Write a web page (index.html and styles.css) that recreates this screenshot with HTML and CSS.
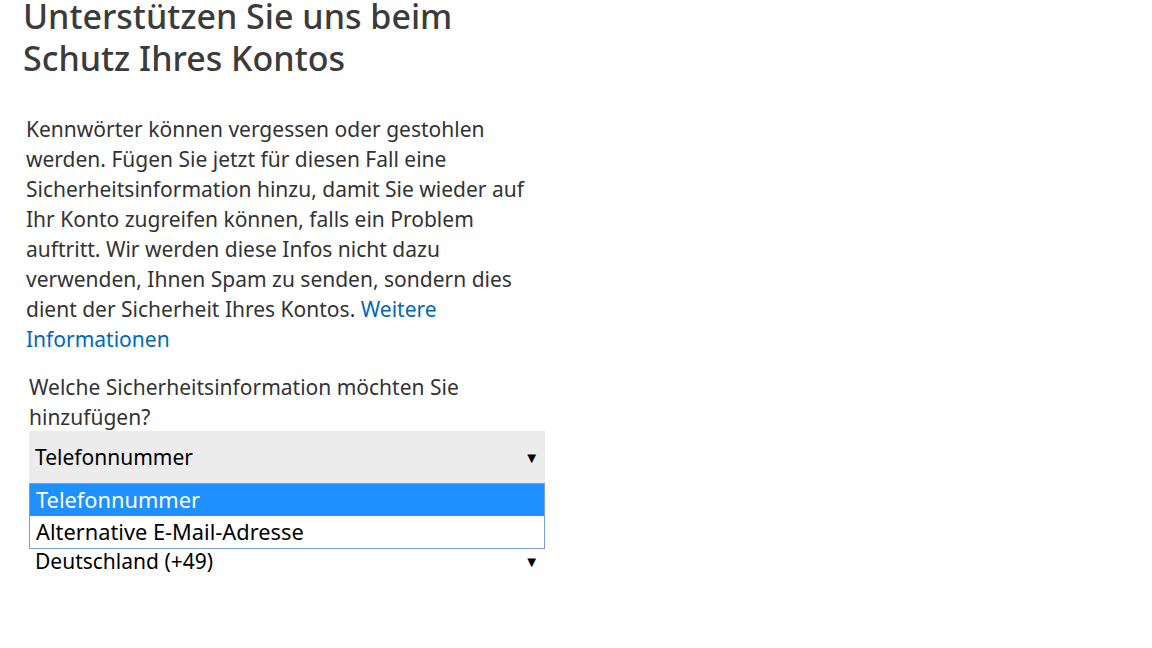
FILE: index.html
```html
<!DOCTYPE html>
<html lang="de">
<head>
    <meta charset="UTF-8">
    <title>Sicherheitsinformationen</title>
    <link rel="stylesheet" href="styles.css">
</head>
<body>
    <div class="page">
        <h1 class="title">Unterstützen Sie uns beim Schutz Ihres Kontos</h1>

        <p class="intro">Kennwörter können vergessen oder gestohlen werden. Fügen Sie jetzt für diesen Fall eine Sicherheitsinformation hinzu, damit Sie wieder auf Ihr Konto zugreifen können, falls ein Problem auftritt. Wir werden diese Infos nicht dazu verwenden, Ihnen Spam zu senden, sondern dies dient der Sicherheit Ihres Kontos. <a href="#">Weitere Informationen</a></p>

        <div class="field">
            <label class="field-label">Welche Sicherheitsinformation möchten Sie hinzufügen?</label>
            <div class="select-wrap">
                <div class="select select-open">
                    <span>Telefonnummer</span>
                    <span class="arrow">▼</span>
                </div>
                <ul class="options">
                    <li class="option selected">Telefonnummer</li>
                    <li class="option">Alternative E-Mail-Adresse</li>
                </ul>
            </div>
            <div class="select select-plain">
                <span>Deutschland (+49)</span>
                <span class="arrow">▼</span>
            </div>
        </div>
    </div>
</body>
</html>
```

FILE: styles.css
```css
html, body {
    min-height: 100%;
}
body {
    margin: 0;
    min-height: 648px;
    background: #fff;
    font-family: "Noto Sans", "Open Sans", sans-serif;
    color: #333;
}
.page {
    width: 540px;
    padding-left: 23px;
}
.title {
    font-size: 34px;
    font-weight: 500;
    line-height: 42px;
    margin: -5px 0 0 0;
    color: #3b3b3b;
    width: 460px;
}
.intro {
    font-size: 21px;
    line-height: 30px;
    margin: 35px 0 0 3px;
    width: 510px;
}
.intro a {
    color: #0067b8;
    text-decoration: none;
}
.field {
    margin: 18px 0 0 6px;
    width: 516px;
}
.field-label {
    display: block;
    font-size: 21px;
    line-height: 30px;
    margin-bottom: -1px;
}
.select-wrap {
    position: relative;
}
.select {
    display: flex;
    justify-content: space-between;
    align-items: center;
    font-size: 21px;
    color: #000;
    padding: 0 6px 0 6px;
}
.select-open {
    background: #ececec;
    height: 52px;
}
.select-plain {
    height: 52px;
    margin-top: 52px;
}
.arrow {
    font-size: 15px;
}
.options {
    position: absolute;
    top: 52px;
    left: 0;
    right: 0;
    margin: 0;
    padding: 0;
    list-style: none;
    background: #fff;
    border: 1px solid #7b9ed9;
    z-index: 2;
}
.option {
    height: 32px;
    line-height: 32px;
    padding-left: 6px;
    font-size: 21.8px;
    color: #000;
}
.option.selected {
    background: #1e90ff;
    color: #fff;
}
```
